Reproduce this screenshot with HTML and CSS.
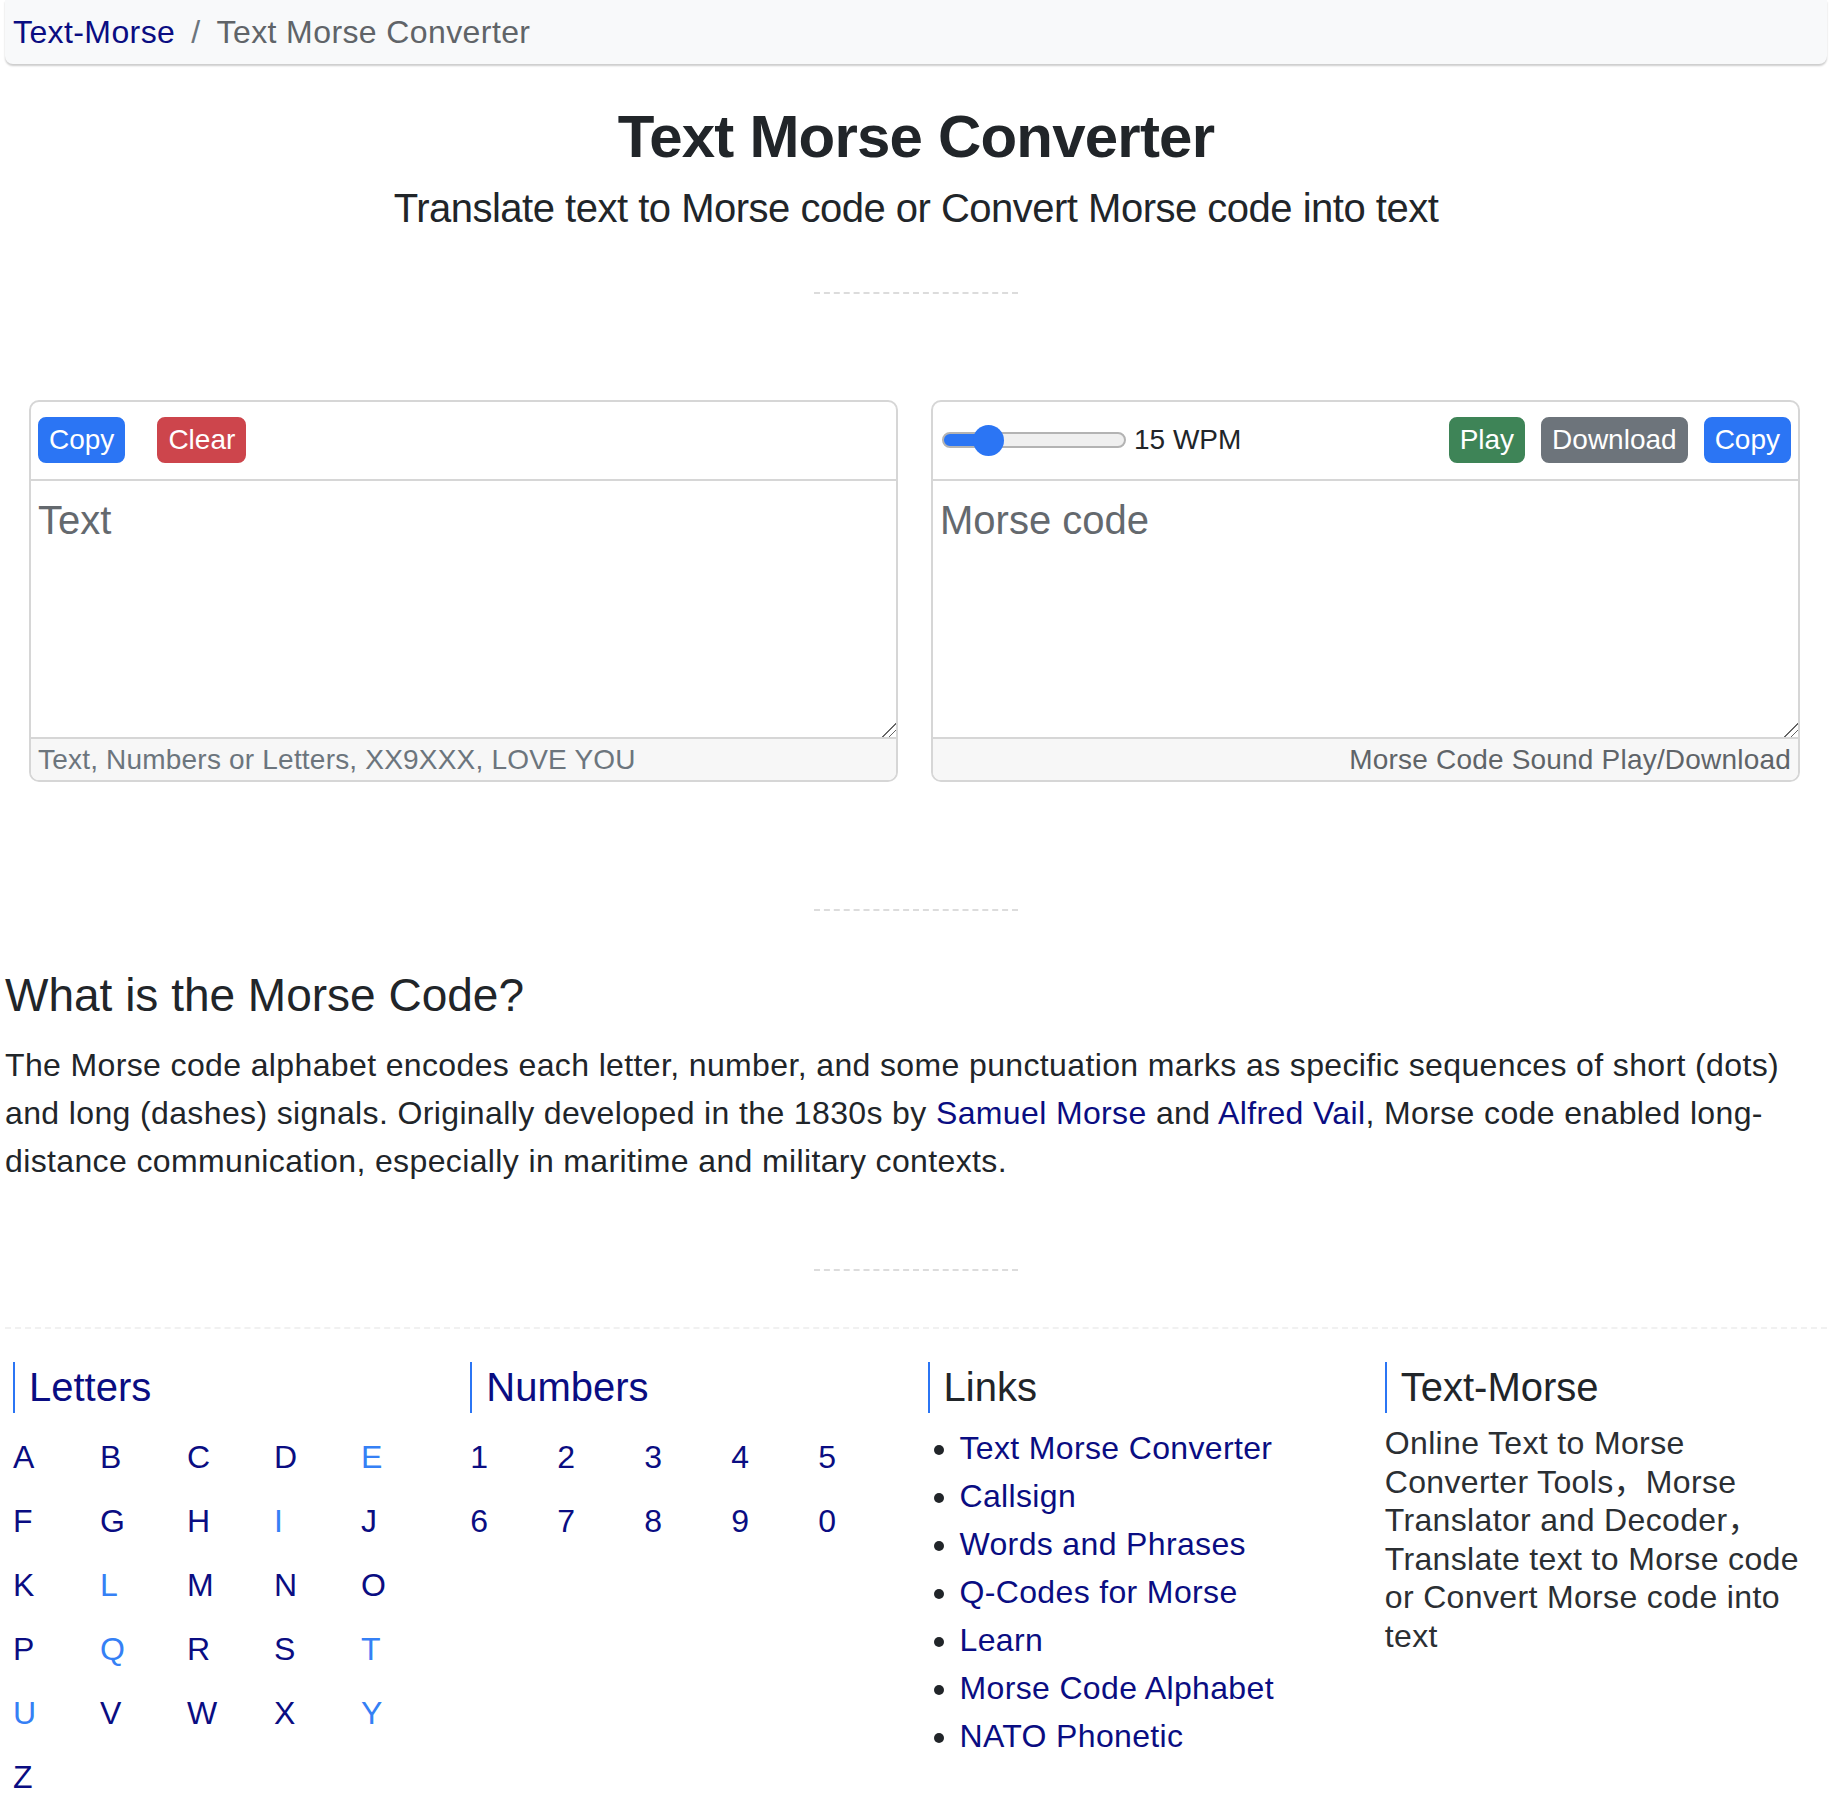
FILE: index.html
```html
<!DOCTYPE html>
<html lang="en">
<head>
<meta charset="utf-8">
<title>Text Morse Converter</title>
<link rel="stylesheet" href="styles.css">
</head>
<body>
<div class="page">
  <ol class="crumbs">
    <li class="crumb"><a href="#">Text-Morse</a></li>
    <li class="crumb active">Text Morse Converter</li>
  </ol>

  <h1 class="title">Text Morse Converter</h1>
  <p class="lead">Translate text to Morse code or Convert Morse code into text</p>
  <hr class="divider">

  <div class="converter">
    <div class="card">
      <div class="card-head">
        <button class="btn btn-blue">Copy</button>
        <button class="btn btn-red">Clear</button>
      </div>
      <textarea class="box" placeholder="Text"></textarea>
      <div class="card-foot">Text, Numbers or Letters, XX9XXX, LOVE YOU</div>
    </div>
    <div class="card">
      <div class="card-head">
        <input class="wpm" type="range" min="10" max="36" value="15">
        <span class="wpm-label">15 WPM</span>
        <div class="actions">
          <button class="btn btn-green">Play</button>
          <button class="btn btn-gray">Download</button>
          <button class="btn btn-blue">Copy</button>
        </div>
      </div>
      <textarea class="box" placeholder="Morse code"></textarea>
      <div class="card-foot right">Morse Code Sound Play/Download</div>
    </div>
  </div>

  <hr class="divider d2">

  <h2 class="about-title">What is the Morse Code?</h2>
  <p class="about">The Morse code alphabet encodes each letter, number, and some punctuation marks as specific sequences of short (dots) and long (dashes) signals. Originally developed in the 1830s by <a href="#">Samuel Morse</a> and <a href="#">Alfred Vail</a>, Morse code enabled long-distance communication, especially in maritime and military contexts.</p>

  <hr class="divider d3">
  <hr class="faint">

  <div class="cols">
    <div class="col">
      <h5 class="col-title navy">Letters</h5>
      <div class="chars">
        <a href="#">A</a><a href="#">B</a><a href="#">C</a><a href="#">D</a><a href="#" class="lite">E</a>
        <a href="#">F</a><a href="#">G</a><a href="#">H</a><a href="#" class="lite">I</a><a href="#">J</a>
        <a href="#">K</a><a href="#" class="lite">L</a><a href="#">M</a><a href="#">N</a><a href="#">O</a>
        <a href="#">P</a><a href="#" class="lite">Q</a><a href="#">R</a><a href="#">S</a><a href="#" class="lite">T</a>
        <a href="#" class="lite">U</a><a href="#">V</a><a href="#">W</a><a href="#">X</a><a href="#" class="lite">Y</a>
        <a href="#">Z</a>
      </div>
    </div>
    <div class="col">
      <h5 class="col-title navy">Numbers</h5>
      <div class="chars">
        <a href="#">1</a><a href="#">2</a><a href="#">3</a><a href="#">4</a><a href="#">5</a>
        <a href="#">6</a><a href="#">7</a><a href="#">8</a><a href="#">9</a><a href="#">0</a>
      </div>
    </div>
    <div class="col">
      <h5 class="col-title">Links</h5>
      <ul class="links">
        <li><a href="#">Text Morse Converter</a></li>
        <li><a href="#">Callsign</a></li>
        <li><a href="#">Words and Phrases</a></li>
        <li><a href="#">Q-Codes for Morse</a></li>
        <li><a href="#">Learn</a></li>
        <li><a href="#">Morse Code Alphabet</a></li>
        <li><a href="#">NATO Phonetic</a></li>
      </ul>
    </div>
    <div class="col">
      <h5 class="col-title">Text-Morse</h5>
      <p class="blurb">Online Text to Morse Converter Tools，Morse Translator and Decoder，Translate text to Morse code or Convert Morse code into text</p>
    </div>
  </div>
</div>
</body>
</html>
```

FILE: styles.css
```css
body {
  margin: 0;
  font-family: "Liberation Sans", Arial, "Noto Sans CJK SC", sans-serif;
  color: #212529;
  background: #fff;
}

a {
  color: #0a0d82;
  text-decoration: none;
}

.page {
  width: 1822px;
  margin-left: 5px;
}

/* breadcrumb */
.crumbs {
  display: flex;
  margin: 0;
  padding: 8px 8px;
  list-style: none;
  background: #f8f9fa;
  font-size: 32px;
  line-height: 48px;
  letter-spacing: 0.4px;
  border-radius: 0 0 8px 8px;
  box-shadow: 0 2px 2px rgba(0, 0, 0, 0.2);
}

.crumb + .crumb {
  padding-left: 16px;
}

.crumb + .crumb::before {
  content: "/";
  padding-right: 16px;
  color: #6c757d;
}

.crumb.active {
  color: #606468;
}

/* header */
.title {
  margin: 37px 0 0;
  text-align: center;
  font-size: 60px;
  line-height: 72px;
  font-weight: 700;
  letter-spacing: -0.8px;
}

.lead {
  margin: 5px 0 0;
  text-align: center;
  font-size: 40px;
  line-height: 60px;
  font-weight: 300;
  letter-spacing: -0.5px;
}

.divider {
  width: 204px;
  height: 0;
  margin: 54px auto 0;
  border: 0;
  border-top: 2px dashed #dcdcdc;
}

.divider.d2 {
  margin-top: 127px;
}

.divider.d3 {
  margin-top: 84px;
}

.faint {
  height: 0;
  margin: 56px 0 0;
  border: 0;
  border-top: 2px dashed #f1f1f1;
}

/* converter cards */
.converter {
  display: flex;
  gap: 33px;
  margin-top: 106px;
  padding: 0 27px 0 24px;
}

.card {
  flex: 1;
  display: flex;
  flex-direction: column;
  border: 2px solid #d6d6d6;
  border-radius: 10px;
  overflow: hidden;
}

.card-head {
  display: flex;
  align-items: center;
  gap: 32px;
  padding: 15px 7px 16px;
  border-bottom: 2px solid #d6d6d6;
}

.actions {
  display: flex;
  gap: 16px;
  margin-left: auto;
}

.btn {
  font-family: "Liberation Sans", Arial, sans-serif;
  font-size: 28px;
  line-height: 42px;
  padding: 0 9px;
  border: 2px solid transparent;
  border-radius: 8px;
  color: #fff;
  cursor: pointer;
}

.btn-blue { background: #2b75f4; border-color: #2b75f4; }
.btn-red { background: #cd454c; border-color: #cd454c; }
.btn-green { background: #3e8457; border-color: #3e8457; }
.btn-gray { background: #6d747b; border-color: #6d747b; }

.wpm {
  -webkit-appearance: none;
  appearance: none;
  width: 184px;
  height: 31px;
  margin: 0 0 0 2px;
  background: transparent;
}

.wpm::-webkit-slider-runnable-track {
  height: 16px;
  box-sizing: border-box;
  border: 2px solid #b3b3b3;
  border-radius: 8px;
  background: linear-gradient(to right, #2b75f4 0, #2b75f4 46px, #efefef 46px);
}

.wpm::-webkit-slider-thumb {
  -webkit-appearance: none;
  appearance: none;
  width: 31px;
  height: 31px;
  margin-top: -9.5px;
  border: 0;
  border-radius: 50%;
  background: #2b75f4;
}

.wpm-label {
  margin-left: -24px;
  font-size: 28px;
  line-height: 42px;
  color: #212529;
}

.box {
  display: block;
  box-sizing: border-box;
  width: 100%;
  height: 256px;
  margin: 0;
  padding: 9px 7px 13px;
  border: 0;
  outline: none;
  resize: vertical;
  font-family: "Liberation Sans", Arial, sans-serif;
  font-size: 40px;
  line-height: 60px;
  color: #212529;
}

.box::placeholder {
  color: #64696e;
}

.box::-webkit-resizer {
  background: linear-gradient(135deg, transparent 0 52%, #666 52% 58%, transparent 58% 74%, #666 74% 80%, transparent 80%);
}

.card-foot {
  padding: 0 7px;
  border-top: 2px solid #d6d6d6;
  background: #f7f7f7;
  font-size: 28px;
  line-height: 41px;
  letter-spacing: 0.2px;
  color: #6c757d;
}

.card-foot.right {
  text-align: right;
  color: #5f6468;
}

/* about */
.about-title {
  margin: 56px 0 0;
  font-size: 46px;
  line-height: 56px;
  font-weight: 500;
}

.about {
  margin: 18px 0 0;
  font-size: 32px;
  line-height: 48px;
  letter-spacing: 0.37px;
}

/* footer columns */
.cols {
  display: grid;
  grid-template-columns: repeat(4, 1fr);
  column-gap: 15px;
  margin-top: 33px;
  padding-left: 8px;
}

.col-title {
  margin: 0;
  padding-left: 14px;
  border-left: 2px solid #2b75f4;
  font-size: 40px;
  line-height: 51px;
  font-weight: 400;
  color: #212529;
}

.col-title.navy {
  color: #0a0d82;
}

.chars {
  display: grid;
  grid-template-columns: repeat(5, 87px);
  margin-top: 12px;
  font-size: 32px;
  line-height: 64px;
}

.chars .lite {
  color: #3580f5;
}

.links {
  margin: 11px 0 0;
  padding-left: 32px;
  font-size: 32px;
  line-height: 48px;
  letter-spacing: 0.35px;
}

.blurb {
  margin: 11px 0 0;
  font-size: 32px;
  line-height: 38.5px;
  letter-spacing: 0.35px;
  color: #2b2f33;
}
```
